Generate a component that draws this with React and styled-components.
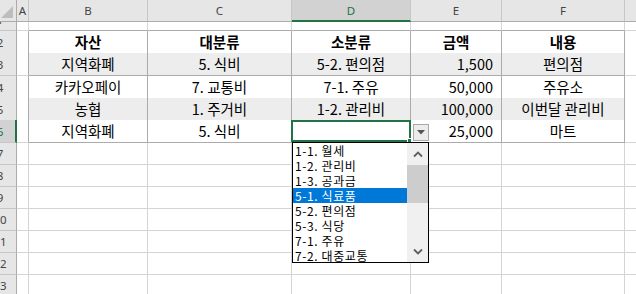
import React from 'react';
import styled, { createGlobalStyle } from 'styled-components';

const GlobalStyle = createGlobalStyle`
  html, body { margin: 0; padding: 0; background: #fff; overflow: hidden; }
  #root { width: 636px; height: 294px; overflow: hidden; }
`;

const COLS = '17px 12px 119px 144px 119px 91px 123px 40px';
const GRID = '#d4d4d4';
const EDGE = '#ababab';
const GREEN = '#217346';

const Sheet = styled.div`
  width: 636px;
  height: 294px;
  overflow: hidden;
  display: flex;
  flex-direction: column;
  font-family: "Noto Sans CJK KR", "Noto Sans", sans-serif;
  color: #000;
`;

const Row = styled.div`
  flex: none;
  display: grid;
  grid-template-columns: ${COLS};
  height: ${p => p.$h}px;
`;

const Corner = styled.div`
  box-sizing: border-box;
  background: #e6e6e6;
  border-right: 1px solid ${EDGE};
  border-bottom: 1px solid ${EDGE};
  display: flex;
  align-items: flex-end;
  justify-content: flex-end;
  padding: 0 3px 3px 0;
  overflow: hidden;
`;

const ColHead = styled.div`
  box-sizing: border-box;
  background: ${p => (p.$sel ? '#d2d2d2' : '#e6e6e6')};
  border-right: 1px solid #c6c6c6;
  border-bottom: ${p => (p.$sel ? `2px solid ${GREEN}` : `1px solid ${EDGE}`)};
  display: flex;
  align-items: center;
  justify-content: center;
  padding-top: ${p => (p.$sel ? 1 : 0)}px;
  font-family: "Noto Sans", "DejaVu Sans", sans-serif;
  font-size: 11.5px;
  color: ${p => (p.$sel ? GREEN : '#444')};
`;

const RowHead = styled.div`
  box-sizing: border-box;
  background: ${p => (p.$sel ? '#d2d2d2' : '#e6e6e6')};
  border-right: ${p => (p.$sel ? `2px solid ${GREEN}` : `1px solid ${EDGE}`)};
  border-bottom: 1px solid #c6c6c6;
  display: flex;
  align-items: center;
  overflow: hidden;
  font-family: "Noto Sans", "DejaVu Sans", sans-serif;
  font-size: 11.5px;
  color: ${p => (p.$sel ? GREEN : '#444')};
`;

const RowNum = styled.span`
  flex: none;
  width: 30px;
  margin-left: -15px;
  margin-top: ${p => p.$dy || 0}px;
  text-align: center;
  line-height: 15px;
`;

const Cell = styled.div`
  box-sizing: border-box;
  position: ${p => (p.$anchor ? 'relative' : 'static')};
  background: ${p => (p.$fill ? '#ededed' : '#fff')};
  border-right: 1px solid ${p => (p.$edgeR ? EDGE : GRID)};
  border-bottom: 1px solid ${p => (p.$edgeB ? EDGE : GRID)};
  display: flex;
  align-items: center;
  justify-content: ${p => (p.$right ? 'flex-end' : 'center')};
  padding: 0 ${p => (p.$right ? 8 : 2)}px 1px 2px;
  font-size: 14.5px;
  font-weight: ${p => (p.$bold ? 700 : 400)};
  white-space: nowrap;
`;

const Selection = styled.div`
  position: absolute;
  left: -1px;
  top: 0;
  width: 120px;
  height: 22px;
  box-sizing: border-box;
  border: 2px solid ${GREEN};
  z-index: 5;
`;

const FillHandle = styled.div`
  position: absolute;
  right: -3px;
  bottom: -3px;
  width: 5px;
  height: 5px;
  box-sizing: border-box;
  background: ${GREEN};
  border: 1px solid #fff;
`;

const DropButton = styled.div`
  position: absolute;
  left: 121px;
  top: 4px;
  width: 16px;
  height: 17px;
  box-sizing: border-box;
  border: 1px solid #a9a9a9;
  background: #ececec;
  display: flex;
  align-items: center;
  justify-content: center;
  z-index: 6;
`;

const DropList = styled.div`
  position: absolute;
  left: 0;
  top: 22px;
  width: 137px;
  height: 121px;
  box-sizing: border-box;
  border: 1px solid #000;
  background: #fff;
  display: flex;
  z-index: 10;
`;

const Options = styled.ul`
  list-style: none;
  margin: 0;
  padding: 0;
  flex: 1;
  min-width: 0;
`;

const Option = styled.li`
  height: 15px;
  line-height: 15px;
  padding-left: 2px;
  font-size: 12px;
  letter-spacing: 0.6px;
  white-space: nowrap;
  background: ${p => (p.$active ? '#0078d7' : 'transparent')};
  color: ${p => (p.$active ? '#fff' : '#000')};
`;

const ScrollBar = styled.div`
  flex: none;
  width: 21px;
  background: #f0f0f0;
  display: flex;
  flex-direction: column;
`;

const ScrollArrow = styled.div`
  flex: none;
  height: ${p => p.$h}px;
  display: flex;
  align-items: center;
  justify-content: center;
`;

const Thumb = styled.div`
  flex: none;
  height: 38px;
  background: #cdcdcd;
`;

const Track = styled.div`
  flex: 1;
`;

const Chevron = ({ up }) => (
  <svg width="10" height="7" viewBox="0 0 10 7">
    <polyline
      points={up ? '1,5.5 5,1.5 9,5.5' : '1,1.5 5,5.5 9,1.5'}
      fill="none"
      stroke="#606060"
      strokeWidth="1.8"
    />
  </svg>
);

const colLetters = ['A', 'B', 'C', 'D', 'E', 'F', ''];

const rows = [
  { n: 2, h: 22, bold: true, cells: ['자산', '대분류', '소분류', '금액', '내용'] },
  { n: 3, h: 23, fill: true, cells: ['지역화폐', '5. 식비', '5-2. 편의점', '1,500', '편의점'] },
  { n: 4, h: 22, cells: ['카카오페이', '7. 교통비', '7-1. 주유', '50,000', '주유소'] },
  { n: 5, h: 22, fill: true, cells: ['농협', '1. 주거비', '1-2. 관리비', '100,000', '이번달 관리비'] },
  { n: 6, h: 23, sel: true, cells: ['지역화폐', '5. 식비', '', '25,000', '마트'] },
];

const options = [
  '1-1. 월세',
  '1-2. 관리비',
  '1-3. 공과금',
  '5-1. 식료품',
  '5-2. 편의점',
  '5-3. 식당',
  '7-1. 주유',
  '7-2. 대중교통',
];

const emptyRows = [7, 8, 9, 10, 11, 12, 13];

export default function App() {
  return (
    <>
      <GlobalStyle />
      <Sheet>
        <Row $h={22}>
          <Corner>
            <svg width="12" height="12" viewBox="0 0 12 12">
              <polygon points="12,0 12,12 0,12" fill="#bdbdbd" />
            </svg>
          </Corner>
          {colLetters.map((c, i) => (
            <ColHead key={i} $sel={c === 'D'}>{c}</ColHead>
          ))}
        </Row>

        <Row $h={9}>
          <RowHead>
            <RowNum $dy={-13}>1</RowNum>
          </RowHead>
          <Cell />
          {[0, 1, 2, 3, 4].map(i => (
            <Cell key={i} $edgeB />
          ))}
          <Cell />
        </Row>

        {rows.map(r => (
          <Row key={r.n} $h={r.h}>
            <RowHead $sel={r.sel}>
              <RowNum>{r.n}</RowNum>
            </RowHead>
            <Cell $edgeR />
            {r.cells.map((t, i) => {
              const isD = i === 2 && r.sel;
              return (
                <Cell
                  key={i}
                  $edgeR
                  $edgeB
                  $fill={r.fill}
                  $bold={r.bold}
                  $right={i === 3 && !r.bold}
                  $anchor={isD}
                >
                  {t}
                  {isD && (
                    <>
                      <Selection>
                        <FillHandle />
                      </Selection>
                      <DropButton>
                        <svg width="8" height="5" viewBox="0 0 8 5">
                          <polygon points="0,0 8,0 4,4.5" fill="#555" />
                        </svg>
                      </DropButton>
                      <DropList>
                        <Options>
                          {options.map((o, k) => (
                            <Option key={o} $active={k === 3}>{o}</Option>
                          ))}
                        </Options>
                        <ScrollBar>
                          <ScrollArrow $h={22}>
                            <Chevron up />
                          </ScrollArrow>
                          <Thumb />
                          <Track />
                          <ScrollArrow $h={21}>
                            <Chevron />
                          </ScrollArrow>
                        </ScrollBar>
                      </DropList>
                    </>
                  )}
                </Cell>
              );
            })}
            <Cell />
          </Row>
        ))}

        {emptyRows.map(n => (
          <Row key={n} $h={22}>
            <RowHead>
              <RowNum>{n}</RowNum>
            </RowHead>
            {colLetters.map((c, i) => (
              <Cell key={i} />
            ))}
          </Row>
        ))}
      </Sheet>
    </>
  );
}
